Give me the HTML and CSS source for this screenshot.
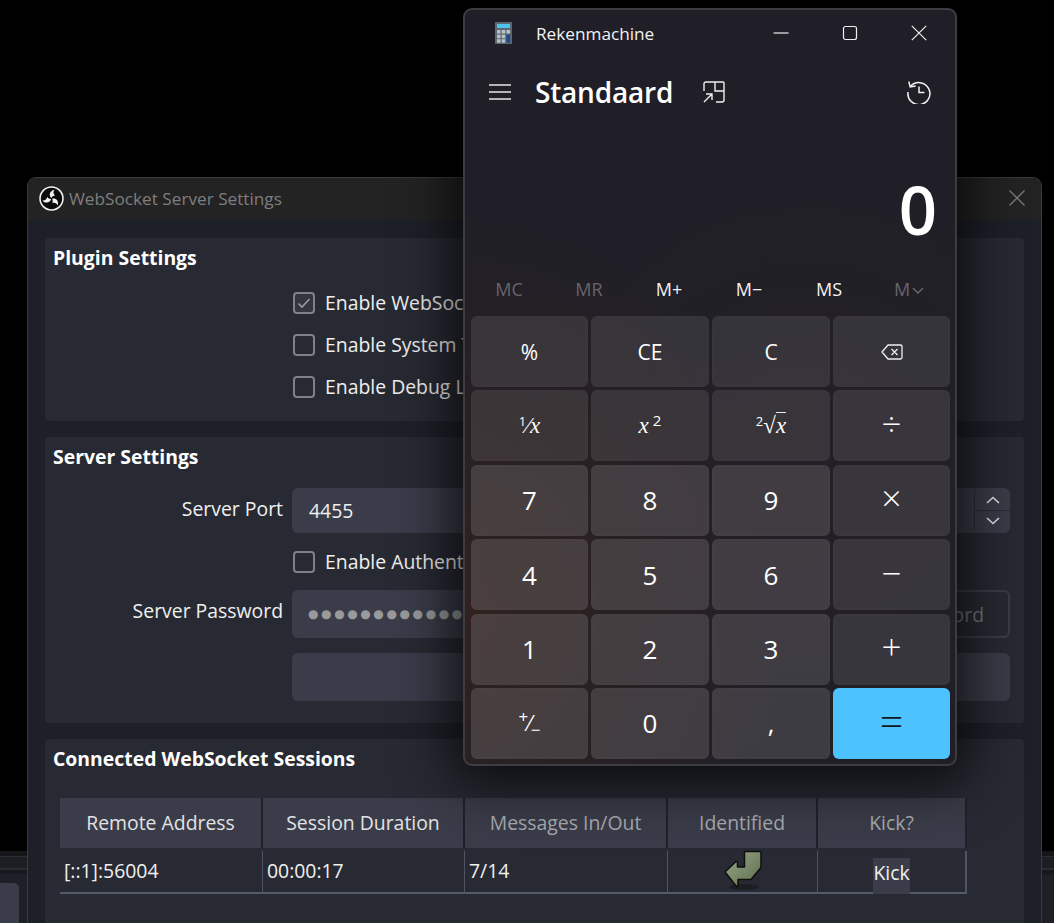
FILE: index.html
```html
<!DOCTYPE html>
<html lang="nl">
<head>
<meta charset="utf-8">
<title>Rekenmachine</title>
<link rel="stylesheet" href="styles.css">
</head>
<body>
<div class="desktop">
  <div class="behind">
    <div class="stripe s1"></div>
    <div class="stripe s2"></div>
    <div class="stripe s3"></div>
    <div class="stripe s4"><span class="behind-btn"></span></div>
  </div>

  <section class="obs">
    <header class="obs-title">
      <svg class="obs-logo" viewBox="0 0 24 24" width="25" height="25">
        <circle cx="12" cy="12" r="11" fill="#0b0b0b" stroke="#f2f2f2" stroke-width="1.500"/>
        <g fill="#f2f2f2">
          <path d="M11.800 11.400C9.400 9.200 9.800 4.600 14.800 3.500C13.400 5.400 13.600 7.500 15.400 9.200C14 9.300 12.800 10 11.800 11.400z"/>
          <path d="M11.800 11.400C9.400 9.200 9.800 4.600 14.800 3.500C13.400 5.400 13.600 7.500 15.400 9.200C14 9.300 12.800 10 11.800 11.400z" transform="rotate(120 12 12)"/>
          <path d="M11.800 11.400C9.400 9.200 9.800 4.600 14.800 3.500C13.400 5.400 13.600 7.500 15.400 9.200C14 9.300 12.800 10 11.800 11.400z" transform="rotate(240 12 12)"/>
        </g>
      </svg>
      <span class="obs-name">WebSocket Server Settings</span>
      <svg class="obs-close" viewBox="0 0 16 16" width="16" height="16"><path d="M0.500 0.500l15 15M15.500 0.500l-15 15" stroke="#7c7c7c" stroke-width="1.300" fill="none"/></svg>
    </header>
    <div class="obs-body">
      <div class="panel panel-plugin">
        <h2 class="panel-title">Plugin Settings</h2>
        <div class="check-row"><span class="box box-on"><svg viewBox="0 0 16 16" width="16" height="16"><path d="M2.500 8.500l3.500 3.500l7.500-8" stroke="#9b9b9b" stroke-width="1.600" fill="none"/></svg></span><span class="check-text">Enable WebSocket server</span></div>
        <div class="check-row"><span class="box"></span><span class="check-text">Enable System Tray Alerts</span></div>
        <div class="check-row"><span class="box"></span><span class="check-text">Enable Debug Logging</span></div>
      </div>

      <div class="panel panel-server">
        <h2 class="panel-title title-server">Server Settings</h2>
        <div class="form-row row-port">
          <label class="form-label">Server Port</label>
          <div class="field field-port">
            <span class="field-text">4455</span>
            <span class="spin">
              <span class="spin-btn"><svg viewBox="0 0 14 8" width="14" height="8"><path d="M1 7l6-5.500l6 5.500" stroke="#e8e8e8" stroke-width="1.600" fill="none"/></svg></span>
              <span class="spin-btn spin-down"><svg viewBox="0 0 14 8" width="14" height="8"><path d="M1 1l6 5.500l6-5.500" stroke="#e8e8e8" stroke-width="1.600" fill="none"/></svg></span>
            </span>
          </div>
        </div>
        <div class="form-row row-auth">
          <span class="form-label"></span>
          <div class="check-inline"><span class="box"></span><span class="check-text">Enable Authentication</span></div>
        </div>
        <div class="form-row row-pass">
          <label class="form-label">Server Password</label>
          <div class="pass-group">
            <div class="field field-pass"><span class="dots">●●●●●●●●●●●●●●●</span></div>
            <div class="btn-outline">Generate Password</div>
          </div>
        </div>
        <div class="form-row row-connect">
          <span class="form-label"></span>
          <div class="btn-fill"></div>
        </div>
      </div>

      <div class="panel panel-sessions">
        <h2 class="panel-title title-sessions">Connected WebSocket Sessions</h2>
        <div class="table">
          <div class="th">Remote Address</div>
          <div class="th">Session Duration</div>
          <div class="th th-dim">Messages In/Out</div>
          <div class="th th-dim">Identified</div>
          <div class="th th-dim">Kick?</div>
          <div class="td">[::1]:56004</div>
          <div class="td">00:00:17</div>
          <div class="td">7/14</div>
          <div class="td td-center">
            <svg class="arrow" viewBox="0 0 40 42" width="40" height="42">
              <defs><linearGradient id="arrowFill" x1="0" y1="0" x2="1" y2="1"><stop offset="0" stop-color="#98a888"/><stop offset="1" stop-color="#5c6c4c"/></linearGradient></defs>
              <ellipse cx="20" cy="38" rx="15" ry="3" fill="#15161b" opacity=".6"/>
              <path d="M21 2.500h15l1 1v15l-10 12h-13v6.500l-1.500 .5l-11.500-14.500l11-10.500l1.500 .5v5h7v-15.500z" fill="url(#arrowFill)" stroke="#0d0e0c" stroke-width="1.500" stroke-linejoin="round"/>
            </svg>
          </div>
          <div class="td td-center td-last"><span class="kick">Kick</span></div>
        </div>
      </div>
    </div>
  </section>

  <section class="calc">
    <header class="calc-title">
      <svg class="calc-icon" viewBox="0 0 17 22" width="17" height="22">
        <rect width="17" height="22" fill="#5c6670"/>
        <rect x="2" y="2" width="13" height="4" fill="#4fc3ee"/>
        <g fill="#b9c1c8"><rect x="2" y="8" width="3.500" height="3.500"/><rect x="6.700" y="8" width="3.500" height="3.500"/><rect x="11.500" y="8" width="3.500" height="3.500"/><rect x="2" y="12.700" width="3.500" height="3.500"/><rect x="6.700" y="12.700" width="3.500" height="3.500"/><rect x="2" y="17.200" width="3.500" height="3.500"/><rect x="6.700" y="17.200" width="3.500" height="3.500"/></g>
        <rect x="11.500" y="12.700" width="3.500" height="8" fill="#12508f"/>
      </svg>
      <span class="calc-name">Rekenmachine</span>
      <span class="win-controls">
        <svg viewBox="0 0 16 16" width="16" height="16"><path d="M0.500 8h15" stroke="#eee" stroke-width="1.200"/></svg>
        <svg viewBox="0 0 16 16" width="16" height="16"><rect x="1.500" y="1.500" width="13" height="13" rx="2" stroke="#eee" stroke-width="1.200" fill="none"/></svg>
        <svg viewBox="0 0 16 16" width="16" height="16"><path d="M0.800 0.800l14.400 14.400M15.200 0.800l-14.400 14.400" stroke="#eee" stroke-width="1.200"/></svg>
      </span>
    </header>
    <div class="calc-head">
      <svg class="burger" viewBox="0 0 22 16" width="22" height="16"><path d="M0 1h22M0 8h22M0 15h22" stroke="#e6e6e6" stroke-width="1.300"/></svg>
      <h1 class="mode">Standaard</h1>
      <svg class="compact" viewBox="0 0 22 22" width="22" height="22"><path d="M1 10V3a2 2 0 0 1 2-2h17a1 1 0 0 1 1 1v17a2 2 0 0 1-2 2h-6M12 1v9h9M1 21l8-8M3 13h6v6" stroke="#f0f0f0" stroke-width="1.400" fill="none"/></svg>
      <svg class="history" viewBox="0 0 24 24" width="24" height="24"><path d="M3.500 6.500a11 11 0 1 1-2.500 5.500M1.800 1.500l1.400 5.500l5.500-1M12 6.500v6h5.500" stroke="#f0f0f0" stroke-width="1.500" fill="none"/></svg>
    </div>
    <div class="display">0</div>
    <div class="memory">
      <span class="mem mem-off">MC</span>
      <span class="mem mem-off">MR</span>
      <span class="mem">M+</span>
      <span class="mem">M−</span>
      <span class="mem">MS</span>
      <span class="mem mem-off">M<svg class="mem-caret" viewBox="0 0 12 7" width="12" height="7"><path d="M1 1l5 5l5-5" stroke="#6b6a70" stroke-width="1.300" fill="none"/></svg></span>
    </div>
    <div class="keys">
      <button class="key fn">%</button>
      <button class="key fn">CE</button>
      <button class="key fn">C</button>
      <button class="key fn"><svg viewBox="0 0 22 16" width="22" height="16"><path d="M7 1h12.500a1.500 1.500 0 0 1 1.500 1.500v11a1.500 1.500 0 0 1-1.500 1.500H7L1 8zM10.500 5l6 6M16.500 5l-6 6" stroke="#f0f0f0" stroke-width="1.300" fill="none" stroke-linejoin="round"/></svg></button>
      <button class="key fn math"><span><sup>1</sup>⁄<i>x</i></span></button>
      <button class="key fn math"><span><i>x</i><sup class="sq">2</sup></span></button>
      <button class="key fn math"><span><sup>2</sup>√<i class="over">x</i></span></button>
      <button class="key fn op">÷</button>
      <button class="key num">7</button>
      <button class="key num">8</button>
      <button class="key num">9</button>
      <button class="key fn op">×</button>
      <button class="key num">4</button>
      <button class="key num">5</button>
      <button class="key num">6</button>
      <button class="key fn op">−</button>
      <button class="key num">1</button>
      <button class="key num">2</button>
      <button class="key num">3</button>
      <button class="key fn op">+</button>
      <button class="key num sign"><span><sup>+</sup>⁄<sub>−</sub></span></button>
      <button class="key num">0</button>
      <button class="key num">,</button>
      <button class="key eq">=</button>
    </div>
  </section>
</div>
</body>
</html>
```
FILE: styles.css
```css
* { box-sizing: border-box; }
html, body { margin: 0; padding: 0; background: #000; }
.desktop {
  position: relative;
  width: 1054px;
  height: 923px;
  overflow: hidden;
  background: #000;
  font-family: "Open Sans", "Noto Sans", sans-serif;
}

/* window behind everything */
.behind {
  position: absolute;
  left: 0;
  right: 0;
  top: 851px;
  bottom: 0;
  display: flex;
  flex-direction: column;
}
.stripe { width: 100%; }
.s1 { height: 10px; background: #14161a; border-bottom: 1px solid #2b2d33; }
.s2 { height: 23px; background: #1c1e24; border-bottom: 2px solid #2a2c33; }
.s3 { height: 7px; background: #17191e; }
.s4 { flex: 1; background: #1d2027; padding-top: 9px; }
.behind-btn { display: block; width: 19px; height: 40px; background: #3a3c4a; border-radius: 0 5px 0 0; }

/* OBS dialog */
.obs {
  position: absolute;
  left: 27px;
  top: 177px;
  width: 1015px;
  height: 780px;
  background: #1e2029;
  border: 1px solid #3b3b3d;
  border-radius: 9px 9px 0 0;
  overflow: hidden;
}
.obs-title {
  height: 42px;
  background: #232324;
  display: flex;
  align-items: center;
  padding: 0 16px 2px 11px;
}
.obs-logo { flex: none; margin-right: 5px; }
.obs-name { flex: 1; color: #7e7e7e; font-size: 17.200px; }
.obs-close { flex: none; }
.obs-body {
  padding: 18px 17px 0;
  display: flex;
  flex-direction: column;
  gap: 16px;
}
.panel {
  background: #282a33;
  border-radius: 4px;
  color: #f0f0f0;
  font-size: 19.400px;
}
.panel-plugin { height: 183px; }
.panel-server { height: 286px; }
.panel-sessions { height: 200px; }
.panel-title {
  margin: 0;
  height: 44px;
  padding: 8px 0 0 8px;
  font-size: 19.400px;
  line-height: 24px;
  font-weight: 700;
  color: #fff;
}
.title-server { height: 51px; }
.title-sessions { height: 59px; }
.check-row {
  height: 42px;
  padding-left: 248px;
  display: flex;
  align-items: center;
  gap: 10px;
  white-space: nowrap;
}
.check-text { padding-bottom: 2px; }
.box {
  flex: none;
  width: 22px;
  height: 22px;
  border: 2px solid #808186;
  border-radius: 4px;
  display: flex;
  align-items: center;
  justify-content: center;
}
.box-on { background: #34363f; }
.form-row {
  display: flex;
  padding-right: 14px;
}
.form-label {
  flex: none;
  width: 238px;
  margin-right: 9px;
  text-align: right;
  line-height: 42px;
  white-space: nowrap;
}
.row-port { height: 45px; }
.row-auth { height: 38px; margin-top: 10px; }
.row-pass { height: 48px; margin-top: 9px; }
.row-connect { height: 48px; margin-top: 15px; }
.field {
  background: #3a3d49;
  border-radius: 6px;
  display: flex;
  align-items: center;
}
.field-port { flex: 1; }
.field-text { flex: 1; padding-left: 17px; }
.spin {
  flex: none;
  width: 36px;
  height: 41px;
  border-left: 1px solid #2b2d35;
  display: flex;
  flex-direction: column;
}
.spin-btn { flex: 1; display: flex; align-items: center; justify-content: center; }
.spin-down { border-top: 1px solid #2b2d35; }
.check-inline {
  display: flex;
  align-items: center;
  gap: 10px;
  padding-left: 1px;
  white-space: nowrap;
}
.pass-group { flex: 1; display: flex; gap: 9px; }
.field-pass { flex: 1; padding-left: 16px; overflow: hidden; }
.dots { color: #9a9a9c; font-size: 12px; letter-spacing: 2.600px; white-space: nowrap; font-family: "DejaVu Sans", sans-serif; }
.btn-outline {
  width: 210px;
  padding-right: 24px;
  border: 2px solid #3a3d49;
  border-radius: 6px;
  color: #74757a;
  display: flex;
  align-items: center;
  justify-content: flex-end;
  white-space: nowrap;
}
.btn-fill {
  flex: 1;
  background: #3a3d49;
  border-radius: 6px;
}
.table {
  margin-left: 15px;
  width: 907px;
  display: grid;
  grid-template-columns: 203px 202px 203px 150px 149px;
  grid-template-rows: 50px 46px;
}
.th {
  background: #3a3d49;
  border-right: 2px solid #20222a;
  text-align: center;
  line-height: 50px;
  color: #e2e2e4;
  white-space: nowrap;
}
.th-dim { color: #a9aab0; }
.td {
  margin-top: 3px;
  padding-left: 4px;
  height: 43px;
  line-height: 40px;
  border-right: 1px solid #4f5363;
  border-bottom: 2px solid #555a6b;
  white-space: nowrap;
}
.td-center { display: flex; justify-content: center; padding-left: 0; }
.td-last { border-right-width: 2px; }
.arrow { margin-top: -2px; margin-left: 2px; }
.kick {
  background: #3a3d49;
  margin-top: 7px;
  height: 36px;
  line-height: 30px;
}

/* calculator */
.calc {
  position: absolute;
  left: 463px;
  top: 8px;
  width: 494px;
  height: 758px;
  border: 2px solid #3d3c41;
  border-radius: 9px;
  background:
    radial-gradient(ellipse 320px 400px at 0% 80%, #2f2220 0%, rgba(47,34,32,0) 100%),
    radial-gradient(ellipse 300px 300px at 70% 60%, #241f26 0%, rgba(36,31,38,0) 100%),
    #201f27;
  box-shadow: 0 6px 55px 12px rgba(0,0,0,.72);
  color: #fff;
  font-family: "Open Sans", "Noto Sans", sans-serif;
}
.calc-title {
  height: 48px;
  display: flex;
  align-items: center;
  padding: 0 0 2px 30px;
}
.calc-icon { flex: none; }
.calc-name { margin-left: 24px; font-size: 17.200px; color: #f2f2f2; }
.win-controls {
  margin-left: auto;
  display: flex;
  align-items: center;
  gap: 53px;
  padding-right: 28px;
}
.win-controls svg { display: block; }
.calc-head {
  height: 68px;
  display: flex;
  align-items: center;
  padding-left: 24px;
}
.burger { flex: none; }
.mode { margin: 0 0 0 24px; font-size: 28px; line-height: 36px; font-weight: 600; letter-spacing: -.2px; }
.compact { flex: none; margin-left: 30px; }
.history { flex: none; margin-left: auto; margin-right: 24px; }
.display {
  height: 140px;
  padding: 48px 18px 0 0;
  text-align: right;
  font-size: 67px;
  line-height: 70px;
  font-weight: 600;
}
.memory {
  margin: 0 0 4px 4px;
  width: 480px;
  height: 46px;
  display: grid;
  grid-template-columns: repeat(6, 80px);
  align-items: center;
  justify-items: center;
  font-size: 18px;
}
.mem { color: #f2f2f2; }
.mem-off { color: #66656b; }
.mem-caret { margin-left: 2px; vertical-align: 2px; }
.keys {
  margin-left: 6px;
  display: grid;
  grid-template-columns: 117px 118px 118px 117px;
  grid-auto-rows: 71px;
  column-gap: 3px;
  row-gap: 3.400px;
}
.key {
  border: 2px solid rgba(255,255,255,.012);
  border-radius: 6px;
  color: #fff;
  font-family: "Open Sans", "Noto Sans", sans-serif;
  font-size: 18px;
  padding: 0;
  margin: 0;
  display: flex;
  align-items: center;
  justify-content: center;
}
.fn { background: rgba(255,255,255,.095); font-size: 21px; }
.num { background: rgba(255,255,255,.135); font-size: 26px; }
.op { background: rgba(255,255,255,.1); font-size: 35px; font-weight: 300; padding-bottom: 5px; }
.eq { background: #4cc2ff; color: #12161c; font-size: 42px; font-weight: 300; border: 0; padding-bottom: 6px; }
.math { font-family: "Liberation Serif", serif; font-size: 23px; }
.math sup { font-family: "Open Sans", sans-serif; font-size: 13px; line-height: 0; vertical-align: 7px; }
.math .sq { font-size: 15px; margin-left: 4px; }
.math .over { border-top: 1px solid #e8e8e8; }
.sign { font-size: 21px; }
.sign sup, .sign sub { font-size: 17px; line-height: 0; }
```
